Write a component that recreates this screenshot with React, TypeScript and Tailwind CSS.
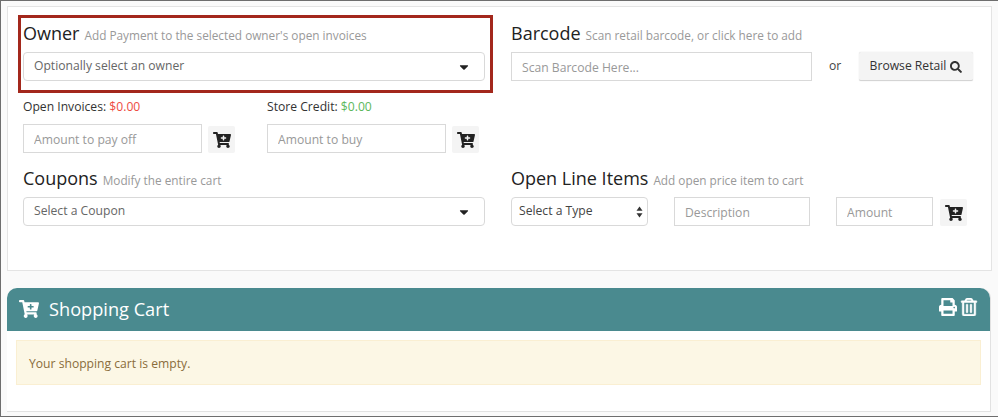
import { FaCartPlus, FaPrint, FaRegTrashAlt, FaSearch, FaCaretDown } from "react-icons/fa";

const fontClass = "font-['Open_Sans',sans-serif]";

function Heading({ title, sub }: { title: string; sub: string }) {
  return (
    <div className="h-[28px] pt-[1px] mb-[5px] flex items-baseline whitespace-nowrap">
      <span className="text-[18px] leading-[27px] text-[#222222]">{title}</span>
      <span className="ml-[5px] text-[11.8px] text-[#999999]">{sub}</span>
    </div>
  );
}

function FakeSelect({ label }: { label: string }) {
  return (
    <div className="h-[29px] w-full rounded-[4px] border border-[#d9d9d9] bg-white flex items-center justify-between pl-[10px] pr-[13px]">
      <span className="text-[12.15px] text-[#666666]">{label}</span>
      <FaCaretDown className="text-[#222222] text-[14px]" />
    </div>
  );
}

function TextInput({ placeholder, className }: { placeholder: string; className: string }) {
  return (
    <input
      readOnly
      placeholder={placeholder}
      className={`h-[29px] border border-[#d9d9d9] bg-white px-[10px] pt-[1px] text-[12.15px] outline-none placeholder:text-[#999999] ${className}`}
    />
  );
}

function CartButton() {
  return (
    <div className="w-[27px] h-[27px] rounded-[2px] bg-[#f4f4f4] flex items-center justify-center text-[#222222] text-[18px]">
      <FaCartPlus />
    </div>
  );
}

function Balance({ label, amount, color, placeholder }: { label: string; amount: string; color: string; placeholder: string }) {
  return (
    <div className="w-[244px]">
      <div className="h-[18px] mb-[8px] text-[12.15px] leading-[18px] text-[#333333]">
        {label} <span className={color}>{amount}</span>
      </div>
      <div className="flex items-end gap-[6px]">
        <TextInput placeholder={placeholder} className="w-[179px]" />
        <CartButton />
      </div>
    </div>
  );
}

export default function App() {
  return (
    <div className={`${fontClass} relative w-[998px] h-[417px] overflow-hidden bg-[#fafafa] border-t border-b border-l border-[#6e6e6e] pt-[5px] pl-[6px]`}>
      <div className="w-[985px] h-[265px] border border-[#e4e4e4] bg-white px-[15px] pt-[12px]">
        <div className="grid grid-cols-[462px_462px] gap-x-[26px]">
          <div>
            <Heading title="Owner" sub="Add Payment to the selected owner's open invoices" />
            <FakeSelect label="Optionally select an owner" />
          </div>
          <div>
            <Heading title="Barcode" sub="Scan retail barcode, or click here to add" />
            <div className="flex items-center">
              <TextInput placeholder="Scan Barcode Here..." className="w-[301px]" />
              <span className="ml-[17px] w-[30px] text-[12.15px] text-[#444444]">or</span>
              <div className="w-[114px] h-[29px] pt-[1px] rounded-[2px] bg-[#f4f4f4] border-b border-[#d4d4d4] shadow-[0_0_1px_#cccccc] flex items-center justify-center gap-[4px] text-[12.15px] text-[#333333]">
                Browse Retail <FaSearch className="text-[12px]" />
              </div>
            </div>
          </div>
          <div className="col-span-2 flex mt-[17px] mb-[11px]">
            <Balance label="Open Invoices:" amount="$0.00" color="text-[#ee4b42]" placeholder="Amount to pay off" />
            <Balance label="Store Credit:" amount="$0.00" color="text-[#5cb85c]" placeholder="Amount to buy" />
          </div>
          <div>
            <Heading title="Coupons" sub="Modify the entire cart" />
            <FakeSelect label="Select a Coupon" />
          </div>
          <div>
            <Heading title="Open Line Items" sub="Add open price item to cart" />
            <div className="flex items-end">
              <div className="w-[137px] h-[29px] rounded-[4px] border border-[#d9d9d9] flex items-center justify-between pl-[7px] pr-[4px]">
                <span className="text-[12.15px] text-[#444444]">Select a Type</span>
                <svg width="7" height="12" viewBox="0 0 7 12" className="fill-[#333333]">
                  <path d="M3.5 0.5 6.5 4.8H0.5Z" />
                  <path d="M3.5 11.5 6.5 7.2H0.5Z" />
                </svg>
              </div>
              <TextInput placeholder="Description" className="ml-[26px] w-[136px]" />
              <TextInput placeholder="Amount" className="ml-[26px] w-[97px]" />
              <div className="ml-[7px]">
                <CartButton />
              </div>
            </div>
          </div>
        </div>
      </div>

      <div className="mt-[17px] w-[984px] h-[124px] rounded-t-[10px] bg-white border-b border-r border-[#e2e2e2]">
        <div className="h-[43px] rounded-t-[10px] bg-[#4a8a8f] flex items-center justify-between pl-[12px] pr-[12px] text-white">
          <div className="flex items-center gap-[10px]">
            <FaCartPlus className="text-[20px]" />
            <span className="text-[18.2px] pt-[1px]">Shopping Cart</span>
          </div>
          <div className="flex items-center gap-[3px] text-[18px] mb-[5px]">
            <FaPrint />
            <FaRegTrashAlt className="stroke-current stroke-[14]" />
          </div>
        </div>
        <div className="mx-[9px] mt-[9px] h-[45px] pt-[3px] border border-[#faefd2] bg-[#fcf7e5] flex items-center px-[12px] text-[12.15px] text-[#8a6d3b]">
          Your shopping cart is empty.
        </div>
      </div>

      <div className="absolute left-[17px] top-[14px] w-[475px] h-[78px] border-[3px] border-[#a3281c] pointer-events-none" />
    </div>
  );
}
